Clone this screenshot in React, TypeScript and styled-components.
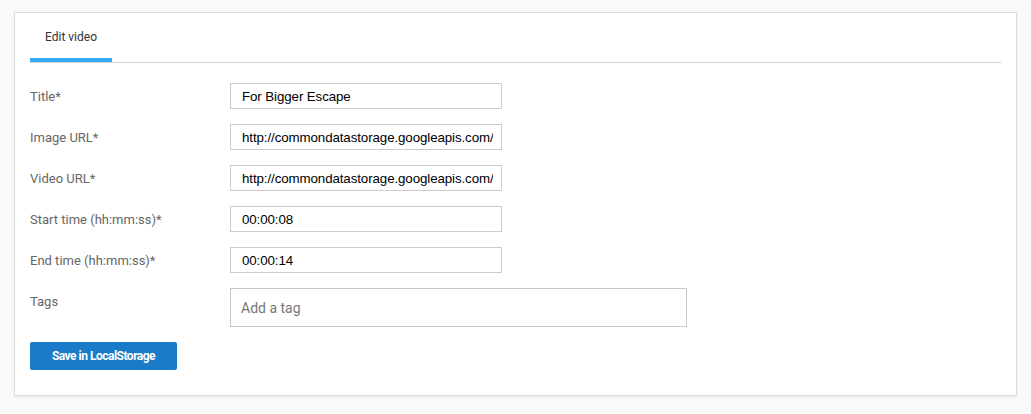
import React, { useState } from 'react';
import styled, { createGlobalStyle } from 'styled-components';

const GlobalStyle = createGlobalStyle`
  html, body {
    margin: 0;
    padding: 0;
    background: #f9f9f9;
  }
  body {
    font-family: Roboto, "Liberation Sans", Arial, sans-serif;
  }
  * {
    box-sizing: border-box;
  }
`;

const Page = styled.div`
  padding: 12px 14px 19px;
`;

const Card = styled.div`
  background: #fff;
  border: 1px solid #dcdcdc;
  box-shadow: 0 1px 2px rgba(0, 0, 0, 0.08);
  padding: 0 15px 25px;
`;

const TabBar = styled.div`
  display: flex;
  border-bottom: 1px solid #cfcfcf;
  margin-bottom: 20px;
`;

const Tab = styled.div<{ $active?: boolean }>`
  height: 49px;
  padding: 2px 15px 0;
  display: flex;
  align-items: center;
  font-size: 12px;
  color: #333;
  border-bottom: 4px solid ${(p) => (p.$active ? '#35a8f6' : 'transparent')};
`;

const Form = styled.form`
  display: flex;
  flex-direction: column;
  gap: 15px;
`;

const Row = styled.div<{ $top?: boolean }>`
  display: flex;
  align-items: ${(p) => (p.$top ? 'flex-start' : 'center')};
`;

const Label = styled.label<{ $top?: boolean }>`
  width: 200px;
  flex-shrink: 0;
  font-size: 13px;
  color: #666;
  padding-top: ${(p) => (p.$top ? '6px' : '0')};
`;

const Input = styled.input`
  width: 272px;
  height: 26px;
  border: 1px solid #cccccc;
  padding: 0 8px 0 11px;
  font-family: "Liberation Sans", Arial, sans-serif;
  font-size: 13.333px;
  letter-spacing: -0.1px;
  color: #000;
  outline: none;
`;

const TagInput = styled.input`
  width: 457px;
  height: 39px;
  border: 1px solid #c8c8c8;
  padding: 0 10px;
  font-family: Roboto, sans-serif;
  font-size: 14px;
  outline: none;
  &::placeholder {
    color: #777;
  }
`;

const SaveButton = styled.button`
  align-self: flex-start;
  width: 147px;
  height: 28px;
  border: none;
  border-radius: 2px;
  background: #1a7bc9;
  color: #fff;
  font-family: Roboto, sans-serif;
  font-weight: 700;
  font-size: 12px;
  letter-spacing: -0.5px;
  cursor: pointer;
`;

const App: React.FC = () => {
  const [title, setTitle] = useState('For Bigger Escape');
  const [imageUrl, setImageUrl] = useState(
    'http://commondatastorage.googleapis.com/gtv-videos-bucket/sample/images/ForBiggerEscapes.jpg'
  );
  const [videoUrl, setVideoUrl] = useState(
    'http://commondatastorage.googleapis.com/gtv-videos-bucket/sample/ForBiggerEscapes.mp4'
  );
  const [start, setStart] = useState('00:00:08');
  const [end, setEnd] = useState('00:00:14');

  return (
    <>
      <GlobalStyle />
      <Page>
        <Card>
          <TabBar>
            <Tab $active>Edit video</Tab>
          </TabBar>
          <Form onSubmit={(e) => e.preventDefault()}>
            <Row>
              <Label>Title*</Label>
              <Input value={title} onChange={(e) => setTitle(e.target.value)} />
            </Row>
            <Row>
              <Label>Image URL*</Label>
              <Input value={imageUrl} onChange={(e) => setImageUrl(e.target.value)} />
            </Row>
            <Row>
              <Label>Video URL*</Label>
              <Input value={videoUrl} onChange={(e) => setVideoUrl(e.target.value)} />
            </Row>
            <Row>
              <Label>Start time (hh:mm:ss)*</Label>
              <Input value={start} onChange={(e) => setStart(e.target.value)} />
            </Row>
            <Row>
              <Label>End time (hh:mm:ss)*</Label>
              <Input value={end} onChange={(e) => setEnd(e.target.value)} />
            </Row>
            <Row $top>
              <Label $top>Tags</Label>
              <TagInput placeholder="Add a tag" />
            </Row>
            <SaveButton type="submit">Save in LocalStorage</SaveButton>
          </Form>
        </Card>
      </Page>
    </>
  );
};

export default App;
